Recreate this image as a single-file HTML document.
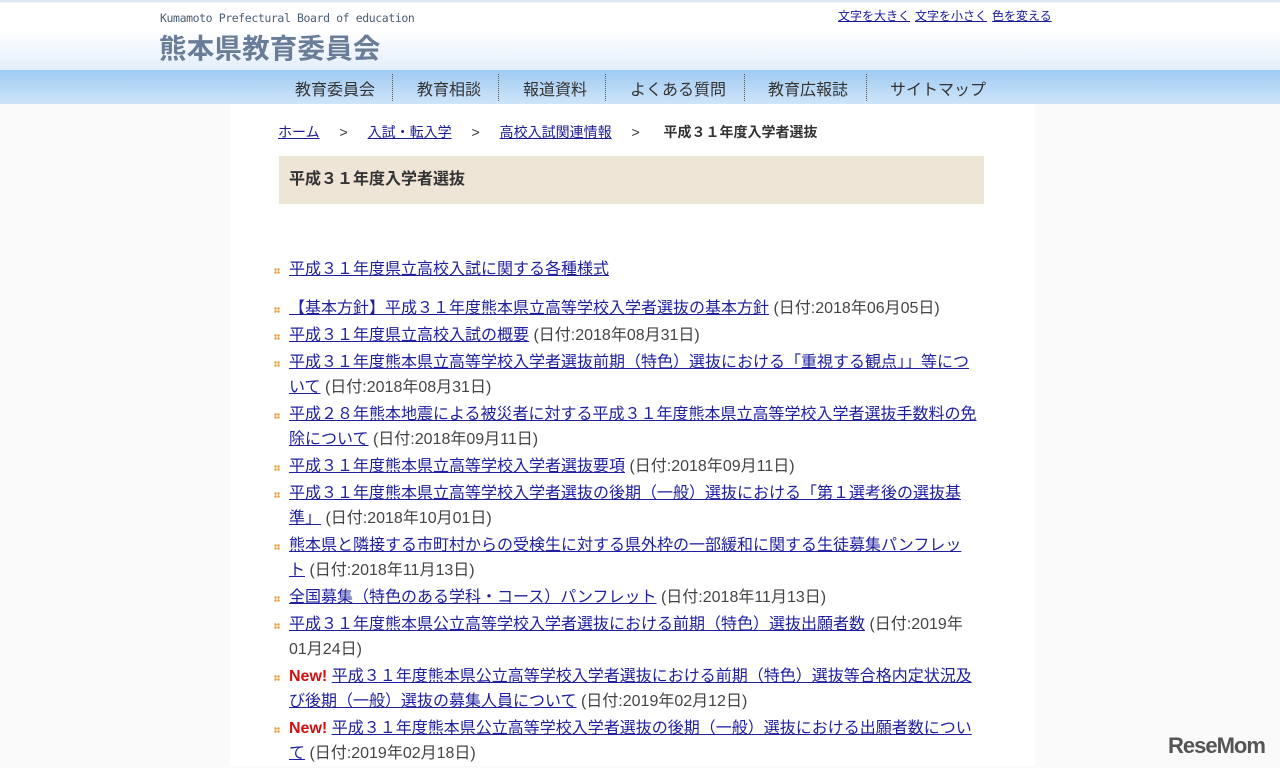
<!DOCTYPE html>
<html><head><meta charset="utf-8"><style>
body{margin:0;background:#fafafa;font-family:"Liberation Sans","Noto Sans CJK JP",sans-serif;width:1280px;height:766px;overflow:hidden;position:relative}
a{text-decoration:underline}
.hd{position:absolute;left:0;top:0;width:1280px;height:70px;background:linear-gradient(#dbe9f6 0,#dbe9f6 2px,#fff 3px,#fff 30px,#e3eefa 70px)}
.en{position:absolute;left:160px;top:11px;font-family:"DejaVu Sans Mono",monospace;font-size:11.5px;color:#4a5e78;letter-spacing:-0.4px}
.jp{position:absolute;left:159px;top:26px;font-size:27.5px;color:#6a7d98;font-weight:bold;letter-spacing:0.2px}
.tl{position:absolute;left:838px;top:7px;font-size:12px}
.tl a{color:#1a1a99;margin-right:5px}
.nav{position:absolute;left:0;top:70px;width:1280px;height:34px;background:linear-gradient(#9fcbf3,#cfe4f9)}
.nav span{position:absolute;top:6px;font-size:16px;color:#333}
.nav i{position:absolute;top:4px;height:27px;border-left:1px dotted #555}
.main{position:absolute;left:230px;top:104px;width:805px;height:662px;background:#fff}
.bc{position:absolute;left:278px;top:122px;font-size:14px;color:#333;white-space:nowrap}
.bc a{color:#1a1a99}
.bc s{text-decoration:none;display:inline-block;width:48px;text-align:center}
.ttl{position:absolute;left:279px;top:156px;width:705px;height:48px;background:#efe5d6;font-size:16px;font-weight:bold;color:#333;line-height:48px;text-indent:10px;box-sizing:border-box}
ul{position:absolute;left:289px;top:257px;width:688px;margin:0;padding:0;list-style:none;font-size:16px;line-height:25px;color:#444}
li{position:relative;margin-bottom:2px}
li:before{content:"";position:absolute;left:-15px;top:11px;width:6px;height:6px;background:radial-gradient(circle,#e8a040 1px,transparent 1.5px) 0 0/3px 3px}
li a{color:#1f1fa0}
.new{color:#d01010;font-weight:bold}
.logo{position:absolute;left:1168px;top:733px;font-size:22px;font-weight:bold;color:#555;letter-spacing:-1px}
</style></head><body>
<div class="hd"></div>
<div class="en">Kumamoto Prefectural Board of education</div>
<div class="jp">熊本県教育委員会</div>
<div class="tl"><a>文字を大きく</a><a>文字を小さく</a><a>色を変える</a></div>
<div class="nav">
<span style="left:295px">教育委員会</span><i style="left:392px"></i>
<span style="left:417px">教育相談</span><i style="left:498px"></i>
<span style="left:523px">報道資料</span><i style="left:605px"></i>
<span style="left:630px">よくある質問</span><i style="left:744px"></i>
<span style="left:768px">教育広報誌</span><i style="left:866px"></i>
<span style="left:890px">サイトマップ</span>
</div>
<div class="main"></div>
<div class="bc"><a>ホーム</a><s>&gt;</s><a>入試・転入学</a><s>&gt;</s><a>高校入試関連情報</a><s>&gt;</s> <b>平成３１年度入学者選抜</b></div>
<div class="ttl">平成３１年度入学者選抜</div>
<ul>
<li style="margin-bottom:14px"><a>平成３１年度県立高校入試に関する各種様式</a></li>
<li><a>【基本方針】平成３１年度熊本県立高等学校入学者選抜の基本方針</a> (日付:2018年06月05日)</li>
<li><a>平成３１年度県立高校入試の概要</a> (日付:2018年08月31日)</li>
<li><a>平成３１年度熊本県立高等学校入学者選抜前期（特色）選抜における「重視する観点」」等について</a> (日付:2018年08月31日)</li>
<li><a>平成２８年熊本地震による被災者に対する平成３１年度熊本県立高等学校入学者選抜手数料の免除について</a> (日付:2018年09月11日)</li>
<li><a>平成３１年度熊本県立高等学校入学者選抜要項</a> (日付:2018年09月11日)</li>
<li><a>平成３１年度熊本県立高等学校入学者選抜の後期（一般）選抜における「第１選考後の選抜基準」</a> (日付:2018年10月01日)</li>
<li><a>熊本県と隣接する市町村からの受検生に対する県外枠の一部緩和に関する生徒募集パンフレッ<br>ト</a> (日付:2018年11月13日)</li>
<li><a>全国募集（特色のある学科・コース）パンフレット</a> (日付:2018年11月13日)</li>
<li><a>平成３１年度熊本県公立高等学校入学者選抜における前期（特色）選抜出願者数</a> (日付:2019年<br>01月24日)</li>
<li><span class="new">New!</span> <a>平成３１年度熊本県公立高等学校入学者選抜における前期（特色）選抜等合格内定状況及び後期（一般）選抜の募集人員について</a> (日付:2019年02月12日)</li>
<li><span class="new">New!</span> <a>平成３１年度熊本県公立高等学校入学者選抜の後期（一般）選抜における出願者数について</a> (日付:2019年02月18日)</li>
</ul>
<div class="logo">ReseMom</div>
</body></html>
